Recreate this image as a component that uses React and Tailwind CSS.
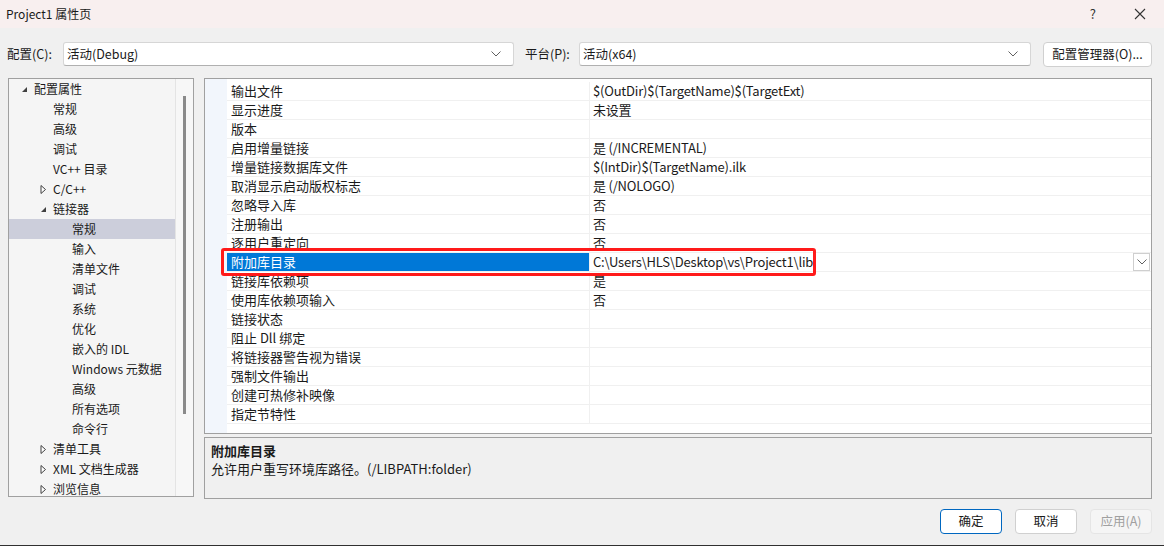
import React from "react";

const font = { fontFamily: '"Microsoft YaHei UI", "Noto Sans CJK SC", "Noto Sans", sans-serif' };

const tree = [
  { label: "配置属性", level: 0, arrow: "open" },
  { label: "常规", level: 1 },
  { label: "高级", level: 1 },
  { label: "调试", level: 1 },
  { label: "VC++ 目录", level: 1 },
  { label: "C/C++", level: 1, arrow: "closed" },
  { label: "链接器", level: 1, arrow: "open" },
  { label: "常规", level: 2, selected: true },
  { label: "输入", level: 2 },
  { label: "清单文件", level: 2 },
  { label: "调试", level: 2 },
  { label: "系统", level: 2 },
  { label: "优化", level: 2 },
  { label: "嵌入的 IDL", level: 2 },
  { label: "Windows 元数据", level: 2 },
  { label: "高级", level: 2 },
  { label: "所有选项", level: 2 },
  { label: "命令行", level: 2 },
  { label: "清单工具", level: 1, arrow: "closed" },
  { label: "XML 文档生成器", level: 1, arrow: "closed" },
  { label: "浏览信息", level: 1, arrow: "closed" },
];

const props = [
  ["输出文件", "$(OutDir)$(TargetName)$(TargetExt)"],
  ["显示进度", "未设置"],
  ["版本", ""],
  ["启用增量链接", "是 (/INCREMENTAL)"],
  ["增量链接数据库文件", "$(IntDir)$(TargetName).ilk"],
  ["取消显示启动版权标志", "是 (/NOLOGO)"],
  ["忽略导入库", "否"],
  ["注册输出", "否"],
  ["逐用户重定向", "否"],
  ["附加库目录", "C:\\Users\\HLS\\Desktop\\vs\\Project1\\lib", true],
  ["链接库依赖项", "是"],
  ["使用库依赖项输入", "否"],
  ["链接状态", ""],
  ["阻止 Dll 绑定", ""],
  ["将链接器警告视为错误", ""],
  ["强制文件输出", ""],
  ["创建可热修补映像", ""],
  ["指定节特性", ""],
];

const Chevron = ({ className = "" }) => (
  <svg width="10" height="6" viewBox="0 0 10 6" className={className}>
    <path d="M0.5 0.5 L5 5 L9.5 0.5" fill="none" stroke="#606060" strokeWidth="1" />
  </svg>
);

const Arrow = ({ type }) =>
  type === "open" ? (
    <svg width="7" height="7" viewBox="0 0 7 7">
      <path d="M6 1 L6 6 L1 6 Z" fill="#404040" />
    </svg>
  ) : (
    <svg width="7" height="9" viewBox="0 0 7 9">
      <path d="M1 0.5 L5.5 4.5 L1 8.5 Z" fill="white" stroke="#404040" strokeWidth="1" />
    </svg>
  );

const Select = ({ value, className }) => (
  <div className={`h-[24px] bg-white border border-[#d6d6d6] border-b-[#b0b0b0] rounded-[3px] flex items-center pl-[3px] pr-[12px] justify-between ${className}`}>
    <span className="text-[12.5px] text-[#1a1a1a]">{value}</span>
    <Chevron />
  </div>
);

export default function App() {
  return (
    <div style={font} className="w-[1164px] h-[546px] bg-[#f0f0f0] flex flex-col text-[12px] text-[#1a1a1a] relative border-b border-[#303030] overflow-hidden">
      {/* title bar */}
      <div className="h-[28px] bg-[#f8efef] flex items-center pl-[6px] shrink-0">
        <span className="text-[12px]">Project1 属性页</span>
        <div className="flex-1" />
        <span className="text-[13px] mr-[38px] text-[#333]">?</span>
        <svg width="12" height="12" viewBox="0 0 12 12" className="mr-[18px]">
          <path d="M1 1 L11 11 M11 1 L1 11" stroke="#333" strokeWidth="1.1" />
        </svg>
      </div>

      {/* config row */}
      <div className="flex items-center mt-[13px] h-[26px] pl-[7px]">
        <span className="w-[56px] text-[12.5px]">配置(C):</span>
        <Select value="活动(Debug)" className="w-[451px]" />
        <span className="ml-[11px] w-[54px] text-[12.5px]">平台(P):</span>
        <Select value="活动(x64)" className="w-[452px]" />
        <button className="ml-[12px] w-[109px] h-[25px] bg-white border border-[#d0d0d0] rounded-[4px] text-[12.5px]">
          配置管理器(O)...
        </button>
      </div>

      {/* main area */}
      <div className="flex mt-[11px] pl-[8px]">
        {/* tree */}
        <div className="w-[186px] h-[419px] border border-[#a0a0a0] bg-[#f5f5f5] flex">
          <div className="w-[166px]">
            {tree.map((t, i) => (
              <div
                key={i}
                className={`h-[20px] flex items-center ${t.selected ? "bg-[#cccedb]" : ""}`}
                style={{ paddingLeft: 1 }}
              >
                <span
                  className="flex items-center justify-center w-[8px]"
                  style={{ marginLeft: t.level === 0 ? 10 : t.level === 1 ? 29 : 48 }}
                >
                  {t.arrow ? <Arrow type={t.arrow} /> : null}
                </span>
                <span className="ml-[6px] whitespace-nowrap">{t.label}</span>
              </div>
            ))}
          </div>
          <div className="flex-1 border-l border-[#e4e4e4] bg-[#f7f7f7] flex justify-center">
            <div className="w-[3px] h-[318px] mt-[17px] bg-[#8a8a8a]" />
          </div>
        </div>

        {/* right */}
        <div className="ml-[10px] w-[948px] flex flex-col">
          <div className="h-[356px] border border-[#a0a0a0] bg-white flex text-[13px]">
            <div className="w-[22px] bg-[#f2f6fc]" />
            <div className="flex-1 pt-[3px]">
              {props.map(([name, value, sel], i) => (
                <div key={i} className="h-[19px] flex border-b border-[#f0f0f0]">
                  <div className={`w-[363px] pl-[4px] flex items-center border-r border-[#f0f0f0] ${sel ? "bg-[#0078d7] text-white" : ""}`}>
                    <span className="whitespace-nowrap">{name}</span>
                  </div>
                  <div className="flex-1 pl-[3px] flex items-center justify-between">
                    <span className="whitespace-nowrap tracking-[-0.2px]">{value}</span>
                    {sel && (
                      <div className="w-[17px] h-[18px] border border-[#cfcfcf] bg-white flex items-center justify-center mr-[1px]">
                        <Chevron />
                      </div>
                    )}
                  </div>
                </div>
              ))}
            </div>
          </div>
          <div className="mt-[3px] h-[62px] border border-[#a0a0a0] bg-[#f0f0f0] px-[6px] pt-[4px] leading-[18px] text-[13px]">
            <div className="font-bold">附加库目录</div>
            <div>允许用户重写环境库路径。(/LIBPATH:folder)</div>
          </div>
        </div>
      </div>

      {/* buttons */}
      <div className="flex justify-end mt-[10px] pr-[12px] gap-[13px]">
        <button className="w-[62px] h-[25px] bg-white border border-[#0067c0] rounded-[4px] text-[12.5px]">确定</button>
        <button className="w-[62px] h-[25px] bg-white border border-[#d0d0d0] rounded-[4px] text-[12.5px]">取消</button>
        <button className="w-[62px] h-[25px] bg-[#f5f5f5] border border-[#e5e5e5] rounded-[4px] text-[12.5px] text-[#a0a0a0]">应用(A)</button>
      </div>

      {/* red annotation box */}
      <div className="absolute left-[221px] top-[248px] w-[595px] h-[28px] border-[3px] border-[#ff1a1a] rounded-[3px] pointer-events-none" />
    </div>
  );
}
